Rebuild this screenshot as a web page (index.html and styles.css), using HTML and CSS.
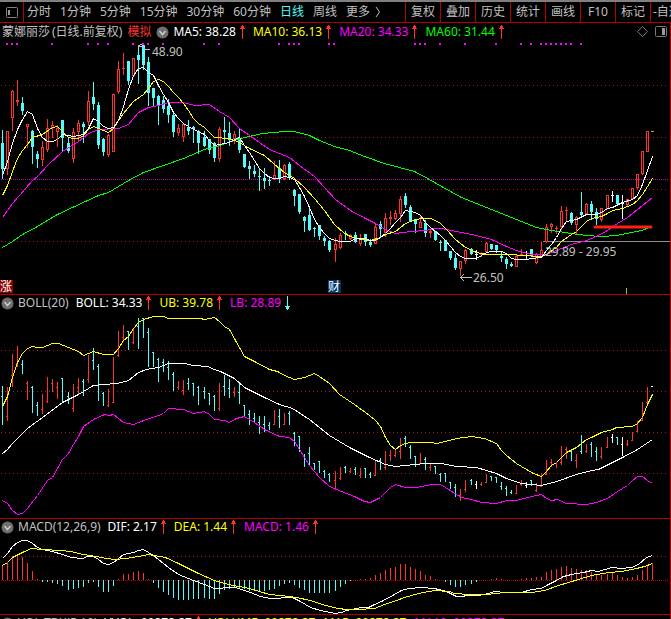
FILE: index.html
```
<!DOCTYPE html>
<html lang="zh-CN">
<head>
  <meta charset="UTF-8">
  <meta name="viewport" content="width=device-width, initial-scale=1.0">
  <title>蒙娜丽莎 日线</title>
  <link rel="stylesheet" href="styles.css">
</head>
<body>
  <svg class="defs" width="0" height="0">
    <symbol id="chevron" viewBox="0 0 13 13">
      <circle cx="6.5" cy="6.5" r="6" fill="#6e6e6e"/>
      <path d="M3.5 5 L6.5 8.5 L9.5 5" fill="none" stroke="#ccc" stroke-width="1.5"/>
    </symbol>
    <symbol id="arrow" viewBox="0 0 5 14">
      <path d="M2 0h1v1h1v2h1v1h-2v10h-1v-10h-2v-1h1v-2h1z" fill="currentColor"/>
    </symbol>
  </svg>

  <nav class="toolbar">
    <button class="layout-btn" aria-label="布局">
      <svg width="12" height="11" viewBox="0 0 12 11"><rect x="0.5" y="0.5" width="11" height="10" rx="1" fill="none" stroke="#808080"/><rect x="2" y="3" width="2" height="5" fill="#999"/></svg>
    </button>
    <div class="periods">
      <button>分时</button>
      <button>1分钟</button>
      <button>5分钟</button>
      <button>15分钟</button>
      <button>30分钟</button>
      <button>60分钟</button>
      <button class="active">日线</button>
      <button>周线</button>
      <button class="more">更多<svg width="6" height="12" viewBox="0 0 6 12"><path d="M1 1 L4.5 6 L1 11" fill="none" stroke="#c0c0c0"/></svg></button>
    </div>
    <div class="tools">
      <button>复权</button>
      <button>叠加</button>
      <button>历史</button>
      <button>统计</button>
      <button>画线</button>
      <button>F10</button>
      <button>标记</button>
      <button class="cut">-自选</button>
    </div>
  </nav>

  <main class="panels">
    <!-- K line -->
    <section class="panel">
      <header class="head main-head">
        <span>蒙娜丽莎</span>
        <span class="sub">(日线.前复权)</span>
        <span class="red">模拟</span>
        <button class="fold" aria-label="指标"><svg width="13" height="13"><use href="#chevron"/></svg></button>
        <span class="val white">MA5: 38.28<svg class="arrow"><use href="#arrow"/></svg></span>
        <span class="val yellow">MA10: 36.13<svg class="arrow"><use href="#arrow"/></svg></span>
        <span class="val magenta">MA20: 34.33<svg class="arrow"><use href="#arrow"/></svg></span>
        <span class="val green">MA60: 31.44<svg class="arrow"><use href="#arrow"/></svg></span>
        <span class="head-icons">
          <svg width="11" height="11" viewBox="0 0 11 11"><path d="M5.5 0.5 L10.5 5.5 L5.5 10.5 L0.5 5.5 Z" fill="none" stroke="#777"/></svg>
          <svg width="12" height="11" viewBox="0 0 12 11"><rect x="0.5" y="0.5" width="11" height="10" rx="1" fill="none" stroke="#777"/><rect x="7" y="2" width="3" height="7" fill="#999"/></svg>
        </span>
      </header>
      <svg class="chart" id="kline" viewBox="0 42 670 252"></svg>
    </section>

    <!-- BOLL -->
    <section class="panel">
      <header class="head">
        <button class="fold" aria-label="指标"><svg width="13" height="13"><use href="#chevron"/></svg></button>
        <span class="name">BOLL(20)</span>
        <span class="val white">BOLL: 34.33<svg class="arrow"><use href="#arrow"/></svg></span>
        <span class="val yellow">UB: 39.78<svg class="arrow"><use href="#arrow"/></svg></span>
        <span class="val magenta">LB: 28.89<svg class="arrow down"><use href="#arrow"/></svg></span>
      </header>
      <svg class="chart" id="boll" viewBox="0 312 670 206"></svg>
    </section>

    <!-- MACD -->
    <section class="panel">
      <header class="head">
        <button class="fold" aria-label="指标"><svg width="13" height="13"><use href="#chevron"/></svg></button>
        <span class="name">MACD(12,26,9)</span>
        <span class="val white">DIF: 2.17<svg class="arrow"><use href="#arrow"/></svg></span>
        <span class="val yellow">DEA: 1.44<svg class="arrow"><use href="#arrow"/></svg></span>
        <span class="val magenta">MACD: 1.46<svg class="arrow"><use href="#arrow"/></svg></span>
      </header>
      <svg class="chart" id="macd" viewBox="0 536 670 78"></svg>
    </section>

    <!-- VOL -->
    <section class="panel last">
      <header class="head">
        <button class="fold" aria-label="指标"><svg width="13" height="13"><use href="#chevron"/></svg></button>
        <span class="name">VOL-TDX(5,10)</span>
        <span class="val white">VVOL: 99878.27<svg class="arrow"><use href="#arrow"/></svg></span>
        <span class="val yellow">VOLUME: 99878.27</span>
        <span class="val yellow">MA5: 99878.27</span>
        <span class="val magenta">MA10: 99878.27</span>
      </header>
    </section>
  </main>

  <script src="chart.js"></script>
</body>
</html>
```
FILE: styles.css
```
* {
    box-sizing: border-box;
}

body {
    margin: 0;
    height: 100vh;
    display: flex;
    flex-direction: column;
    overflow: hidden;
    background: #000;
    color: #c0c0c0;
    font-family: "Noto Sans", "Noto Sans CJK SC", sans-serif;
    font-size: 12px;
    line-height: 16px;
    border-top: 2px solid #808080;
}

.defs {
    position: absolute;
}

button {
    margin: 0;
    padding: 0;
    border: 0;
    background: none;
    color: inherit;
    font: inherit;
    white-space: nowrap;
    cursor: pointer;
}

/* toolbar */

.toolbar {
    flex: none;
    display: flex;
    height: 21px;
    border-bottom: 1px solid #b00000;
}

.layout-btn {
    flex: none;
    width: 24px;
    display: flex;
    align-items: center;
    justify-content: center;
    border-right: 1px solid #b00000;
}

.periods {
    flex: 1;
    min-width: 0;
    overflow: hidden;
    display: flex;
    align-items: center;
    gap: 9px;
    padding-left: 3px;
}

.periods .active {
    color: #54fcfc;
}

.more {
    display: flex;
    align-items: center;
    gap: 5px;
}

.tools {
    flex: none;
    display: flex;
}

.tools button {
    width: 35px;
    border-left: 1px solid #b00000;
}

.tools .cut {
    width: 21px;
    padding-left: 2px;
    text-align: left;
    overflow: hidden;
}

/* panels */

.panels {
    flex: 1;
    min-height: 0;
    display: flex;
    flex-direction: column;
    border-right: 1px solid #b00000;
}

.panel {
    flex: none;
    border-bottom: 1px solid #b00000;
}

.panel.last {
    flex: 1;
    min-height: 0;
    overflow: hidden;
    border-bottom: 0;
}

.head {
    display: flex;
    align-items: center;
    gap: 5px;
    height: 17px;
    padding-left: 1px;
    padding-bottom: 2px;
    white-space: nowrap;
}

.main-head {
    height: 19px;
    padding-left: 2px;
}

.sub {
    margin-left: -3px;
}

.fold {
    display: flex;
    padding-top: 1px;
}

.main-head .fold {
    margin-right: -1px;
}

.name {
    margin-left: -1px;
    margin-right: 2px;
}

.val {
    display: flex;
    align-items: center;
    gap: 4px;
    margin-right: 3px;
}

.arrow {
    width: 5px;
    height: 14px;
    color: #ff3232;
}

.arrow.down {
    color: #54fcfc;
    transform: rotate(180deg);
}

.red {
    color: #ff3232;
}

.white {
    color: #fff;
}

.yellow {
    color: #ff0;
}

.magenta {
    color: #f0f;
}

.green {
    color: #0f0;
}

.head-icons {
    margin-left: auto;
    display: flex;
    align-items: center;
    gap: 7px;
    padding-right: 3px;
}

/* charts */

.chart {
    display: block;
    width: 100%;
    height: auto;
    shape-rendering: crispEdges;
}

.chart text {
    font-size: 12px;
    fill: #c0c0c0;
}

.chart .badge {
    fill: #fff;
}
```
FILE: chart.js
```
const NS = "http://www.w3.org/2000/svg";
const RED = "#ff3232";
const CYAN = "#54fcfc";
const COLORS = { r: RED, c: CYAN, w: "#fff" };

// high, body top, body bottom, low, colour
const bars = `130 143 169 179 c|131 131 169 175 r|90 91 118 131 r|80 100 102 106 r|97 103 111 115 c
124 124 127 148 r|130 131 147 164 c|151 154 159 168 c|141 147 160 166 r|119 128 150 152 r
121 125 128 138 r|125 128 132 147 r|120 120 138 151 c|138 143 151 153 c|128 132 159 163 r
120 123 132 142 r|122 124 127 143 c|91 101 122 126 r|82 97 104 110 c|102 105 145 149 c
138 139 152 156 c|134 135 155 157 r|94 94 152 152 r|61 69 92 94 r|53 68 69 75 r
61 61 81 85 c|58 58 76 77 r|45 55 60 84 c|45 45 65 70 c|57 62 93 106 c
88 88 98 106 c|95 96 105 125 c|96 100 109 113 c|99 106 115 123 c|113 115 132 137 c
124 128 133 136 r|123 124 137 142 r|120 127 131 135 c|126 127 129 143 c|130 131 143 154 c
131 137 146 147 c|139 139 150 154 c|142 143 158 162 c|127 129 159 162 r|117 130 132 143 c
122 133 140 146 c|131 134 139 144 r|128 138 150 153 c|154 154 167 168 c|161 166 169 179 c
165 171 174 177 c|168 176 177 191 c|168 178 181 189 c|176 180 181 186 c|161 175 179 180 r
160 168 178 183 c|164 165 179 180 r|162 164 178 180 c|189 190 196 206 c|194 194 212 214 c
216 217 221 232 c|207 215 230 231 c|227 228 229 237 c|225 225 236 240 c|236 238 241 246 c
240 241 250 252 c|238 244 250 262 r|233 235 248 249 r|231 233 234 240 c|234 235 239 240 r
232 235 242 243 c|234 239 244 246 r|234 234 242 246 c|239 242 245 247 c|224 227 244 244 r
221 224 229 237 c|213 218 233 237 r|211 217 219 225 r|210 213 219 220 r|196 199 214 222 r
193 196 205 208 c|205 207 221 222 c|219 219 224 233 c|215 222 228 228 r|220 223 233 237 c
229 231 233 238 r|231 231 240 241 c|240 242 243 251 c|240 240 251 251 c|251 251 258 260 c
254 258 268 270 c|261 261 269 276 r|249 250 261 264 r|248 249 254 255 c|250 254 255 260 w
252 253 255 257 r|242 243 252 253 r|244 244 249 250 c|245 245 250 253 c|252 256 258 262 c
257 259 264 269 c|262 264 266 267 c|255 256 267 267 r|249 254 255 256 r|251 255 256 259 w
249 249 256 257 c|253 254 263 264 r|242 250 257 258 r|224 227 242 243 r|223 224 227 233 r
226 228 229 234 r|206 211 227 230 r|207 210 211 222 r|212 213 223 225 c|216 217 225 234 r
192 212 215 216 c|203 204 214 215 r|201 204 212 220 c|208 212 219 225 c|208 208 220 222 r
195 195 209 209 r|191 195 196 202 w|195 195 204 205 c|195 203 204 219 w|199 199 205 206 r
188 188 199 200 r|174 174 188 189 r|151 151 174 175 r|131 131 152 152 r`
  .split(/[|\n]/).map(row => {
    const [high, top, bottom, low, c] = row.trim().split(" ");
    return { high: +high, top: +top, bottom: +bottom, low: +low, c };
  });

const hist = [14, 18, 24, 25, 23, 17, 9, 1, -2, -2, -3, -4, -6, -10, -9, -8, -7, -3, -2, -7,
  -12, -12, -6, 1, 6, 6, 8, 9, 7, 1, -3, -8, -12, -15, -18, -20, -20, -20, -19, -19,
  -18, -19, -19, -14, -10, -9, -7, -8, -9, -11, -11, -11, -11, -10, -9, -6, -4, -3, -5, -8,
  -10, -13, -13, -13, -13, -13, -11, -7, -4, -1, 0, 1, 1, 2, 5, 7, 10, 12, 13, 16,
  16, 13, 11, 9, 5, 4, 1, 0, -2, -5, -7, -7, -5, -4, -2, 0, 0, 1, 2, 1,
  0, 0, 0, 1, 2, 2, 3, 3, 8, 10, 11, 13, 14, 12, 11, 10, 10, 8, 6, 5,
  6, 7, 5, 3, 2, 3, 5, 10, 15, 17];

const ma5 = "2,175 7,161 12,143 17,129 22,119 27,111 32,114 37,128 42,137 47,141 52,141 57,139 62,134 73,136 83,134 88,128 93,118 98,121 103,126 108,128 113,127 118,120 123,106 128,89 133,75 138,68 143,67 148,72 153,75 158,85 163,94 168,102 173,112 178,118 183,123 193,129 204,134 209,140 214,145 219,144 229,142 234,139 239,137 244,145 249,152 254,160 259,168 264,173 269,177 274,178 279,178 284,176 289,177 294,179 299,187 304,196 309,207 314,219 319,227 324,233 329,238 335,240 340,241 350,241 355,238 365,238 370,240 375,240 380,237 385,233 390,228 395,222 400,217 405,210 415,212 420,215 425,222 430,227 435,231 440,235 445,240 450,246 455,252 460,256 465,258 476,258 481,255 486,252 491,251 501,251 506,253 511,258 516,259 526,259 531,258 541,257 546,250 551,244 556,237 561,228 566,221 576,219 586,214 596,214 601,212 607,208 612,207 622,202 632,199 637,195 642,184 647,170 652,156";
const ma10 = "2,195 7,185 12,171 17,158 22,150 27,144 32,137 42,134 52,127 57,126 62,131 68,137 73,138 78,138 83,135 88,129 93,126 98,128 103,130 108,132 113,128 118,120 123,113 133,101 143,94 148,88 153,81 158,79 163,81 168,86 173,92 178,97 183,103 188,110 193,118 198,123 204,127 209,132 214,137 229,138 239,142 249,148 264,155 274,164 284,172 294,178 304,187 314,198 324,210 334,224 344,233 350,236 360,239 370,240 380,237 385,234 395,231 405,223 410,221 420,218 430,218 435,220 440,223 447,230 455,239 465,247 476,252 486,254 511,254 521,255 541,256 546,254 556,247 561,241 571,234 576,231 586,221 591,218 601,216 607,213 612,210 622,208 632,204 637,200 642,194 647,186 652,178";
const ma20 = "2,217 12,203 32,180 37,176 47,165 62,151 78,141 88,133 98,129 118,128 128,124 138,112 148,107 158,105 168,102 183,102 194,105 209,104 219,111 229,117 239,128 249,135 269,149 289,157 299,165 314,176 324,187 335,199 350,210 365,218 375,223 385,229 395,233 410,231 425,230 435,228 441,228 456,231 476,235 491,239 506,246 516,250 531,254 546,254 556,250 571,244 586,240 596,236 607,230 617,223 627,217 637,209 652,197";
const ma60 = "2,247 12,241 22,234 37,226 57,214 72,207 98,195 108,192 128,180 143,172 163,165 183,158 204,149 219,145 234,140 244,137 262,133 284,131 294,131 309,135 319,140 334,146 349,150 364,156 384,163 399,167 414,171 429,179 441,186 461,197 481,205 501,213 521,221 536,227 551,230 571,233 586,235 601,236 616,235 631,232 641,230 652,226";

const ub = "2,406 7,396 12,377 17,362 22,353 27,348 32,346 37,347 42,347 52,343 58,343 68,347 78,351 83,355 93,351 103,354 113,354 118,348 123,340 128,336 133,328 138,322 143,319 153,316 163,316 168,318 200,318 204,319 214,317 219,321 224,326 229,329 235,340 239,347 244,356 254,361 269,369 277,371 284,375 294,379 304,377 314,373 319,376 329,383 339,394 354,404 369,415 375,420 380,426 385,437 390,445 395,449 400,445 405,443 410,442 430,442 436,443 441,442 456,438 471,436 484,438 496,443 501,450 506,455 516,463 526,469 533,473 541,476 546,471 551,465 556,462 561,457 566,452 576,447 586,439 591,437 601,432 612,429 616,427 632,426 637,423 642,417 647,404 652,394";
const mid = "2,453 7,449 12,443 27,428 42,417 62,402 78,394 88,388 93,385 103,384 117,383 128,380 138,372 146,369 158,367 168,363 184,363 193,365 207,366 214,369 220,371 234,378 244,387 264,397 279,404 292,408 309,419 319,427 329,435 349,447 369,457 385,464 395,466 415,464 425,463 441,463 456,466 476,467 496,473 506,478 521,483 541,485 556,481 576,474 591,470 598,469 612,462 622,457 637,449 652,439";
const lb = "2,500 7,503 12,510 17,514 22,513 27,508 37,495 47,480 52,477 62,459 68,453 73,444 78,436 83,426 93,419 104,414 109,415 113,414 118,418 123,422 133,424 146,419 158,415 163,413 168,408 183,409 193,413 204,411 209,414 214,419 224,420 229,422 236,418 244,416 254,422 264,429 279,436 289,437 294,441 299,449 304,457 309,465 319,477 329,486 341,491 354,496 364,501 370,502 380,497 385,492 390,487 395,484 405,487 416,487 431,484 440,484 445,487 456,494 461,497 471,499 481,502 496,503 506,500 516,500 531,496 541,494 546,498 551,500 557,499 566,503 586,504 596,502 607,498 617,491 627,485 632,480 637,476 642,476 647,480 652,483";

const dif = "2,558 7,553 12,546 17,542 22,540 27,540 32,543 37,547 42,549 52,551 62,554 71,557 82,558 87,556 93,556 98,559 103,563 108,564 113,562 118,558 123,554 133,552 138,550 143,549 148,552 153,555 158,559 168,567 178,574 193,580 204,584 214,588 220,588 225,587 235,587 250,592 260,596 270,598 292,597 300,601 310,607 320,610 335,613 341,612 346,610 361,607 368,607 374,604 381,601 394,594 401,590 408,588 421,587 434,588 446,591 456,596 461,596 467,595 478,595 488,593 494,591 504,592 521,592 531,589 541,588 548,584 556,580 563,576 571,574 583,572 591,570 598,571 611,567 621,568 631,567 638,564 646,557 652,555";
const dea = "2,565 7,562 12,557 22,552 31,548 42,549 60,550 70,551 83,554 96,556 106,558 115,559 125,558 138,556 148,554 165,557 178,563 198,573 214,580 228,584 249,588 269,594 280,595 296,597 310,600 325,605 338,608 346,609 358,609 374,608 384,604 396,600 404,597 418,593 434,590 449,591 454,593 468,594 486,594 504,592 531,592 544,590 558,585 568,582 578,579 591,575 608,572 621,571 636,568 644,566 652,563";

// bars are a bit more than 5px apart
const barX = i => 2 + 5 * i + Math.floor((i + 13.9) / 26.6);

// main price scale -> boll scale
const toBoll = y => Math.round(318 + (y - 44.5) * 0.792);

function add(svg, tag, attrs, text) {
  const el = document.createElementNS(NS, tag);
  for (const key in attrs) el.setAttribute(key, attrs[key]);
  if (text) el.textContent = text;
  svg.appendChild(el);
}

function rect(svg, x, y, width, height, fill) {
  add(svg, "rect", { x, y, width, height, fill });
}

function hline(svg, y, color, dash) {
  add(svg, "path", { d: `M1 ${y + 0.5}H668`, stroke: color, "stroke-dasharray": dash });
}

function line(svg, points, color) {
  const shifted = points.split(" ").map(p => p.split(",").map(n => +n + 0.5).join()).join(" ");
  add(svg, "polyline", { points: shifted, fill: "none", stroke: color, "stroke-width": 1 });
}

/* K line */
const kline = document.getElementById("kline");
[85, 137, 189, 241].forEach(y => hline(kline, y, "#b01818", "1 3"));
hline(kline, 179, "#c000c0", "1 1");
rect(kline, 543, 241, 127, 1, "#909090");

[7, 12, 17, 52, 88, 98, 108, 133, 143, 148, 163, 204, 219, 279, 289, 294, 299, 329, 334, 415, 420, 425,
  440, 465, 496, 521, 531, 541, 546, 551, 556, 561, 566, 571, 581].forEach(x => rect(kline, x - 1, 43, 2, 2, "#f0f"));

bars.forEach((b, i) => {
  const x = barX(i);
  const color = COLORS[b.c];
  if (b.c === "r" && b.bottom - b.top > 2) {
    rect(kline, x, b.high, 1, b.top - b.high, color);
    rect(kline, x, b.bottom, 1, b.low - b.bottom, color);
    add(kline, "rect", { x: x - 0.5, y: b.top + 0.5, width: 2, height: b.bottom - b.top - 1, fill: "none", stroke: color });
  } else {
    rect(kline, x, b.high, 1, b.low - b.high, color);
    rect(kline, x - 1, b.top, 3, Math.max(1, b.bottom - b.top), color);
  }
});
rect(kline, 651, 131, 3, 1, "#c0b000");

line(kline, ma60, "#0f0");
line(kline, ma20, "#f0f");
line(kline, ma10, "#ff0");
line(kline, ma5, "#fff");

add(kline, "path", { d: "M595 227H651", stroke: "#ff2010", "stroke-width": 3, "stroke-linecap": "round", "shape-rendering": "auto" });
rect(kline, 626, 288, 1, 6, "#c0b000");

add(kline, "path", { d: "M138.5 47.5V45.5L142 44.5M138.5 46.5H142M143 47L145 49H150", fill: "none", stroke: "#c0c0c0" });
add(kline, "text", { x: 152, y: 56 }, "48.90");
add(kline, "path", { d: "M472 277.5H460.5M464 274L460.5 277.5L464 281", fill: "none", stroke: "#c0c0c0" });
add(kline, "text", { x: 473, y: 282 }, "26.50");
add(kline, "text", { x: 545, y: 256 }, "29.89 - 29.95");

add(kline, "rect", { x: 0, y: 280, width: 13, height: 13, rx: 1, fill: "#900000" });
add(kline, "text", { x: 0, y: 291, class: "badge" }, "涨");
add(kline, "rect", { x: 328, y: 280, width: 13, height: 13, fill: "#003468" });
add(kline, "text", { x: 328, y: 291, class: "badge" }, "财");

/* BOLL */
const boll = document.getElementById("boll");
[350, 391, 432, 473].forEach(y => hline(boll, y, "#b01818", "1 3"));
bars.forEach((b, i) => {
  const x = barX(i);
  const high = toBoll(b.high);
  const open = toBoll(b.c === "r" ? b.bottom - 1 : b.top);
  rect(boll, x, high, 1, toBoll(b.low) - high, COLORS[b.c]);
  rect(boll, x - 1, open, 1, 1, COLORS[b.c]);
});
rect(boll, 651, 386, 2, 1, "#fff");
line(boll, ub, "#ff0");
line(boll, mid, "#fff");
line(boll, lb, "#f0f");

/* MACD */
const macd = document.getElementById("macd");
hline(macd, 556, "#b01818", "1 3");
hline(macd, 580, "#c00000", "1 1");
hist.forEach((h, i) => {
  rect(macd, barX(i), h > 0 ? 580 - h : 580, 1, Math.abs(h), h > 0 ? RED : CYAN);
});
line(macd, dif, "#fff");
line(macd, dea, "#ff0");
```
